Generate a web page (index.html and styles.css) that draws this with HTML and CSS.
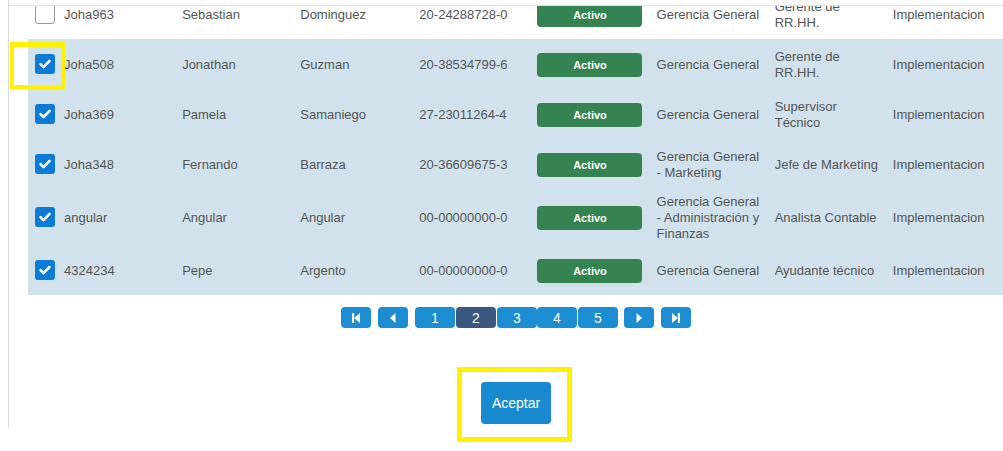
FILE: index.html
```html
<!DOCTYPE html>
<html lang="es">
<head>
<meta charset="utf-8">
<title>Usuarios</title>
<link rel="stylesheet" href="styles.css">
</head>
<body>
<div class="panel">
  <div class="topbar"></div>
  <div class="table-wrap">
    <table class="grid">
      <colgroup>
        <col class="c-chk"><col class="c118"><col class="c118"><col class="c119"><col class="c118"><col class="c119"><col class="c118"><col class="c118"><col class="c-last">
      </colgroup>
      <tbody>
        <tr>
          <td class="chk"><span class="box"></span></td>
          <td>Joha963</td><td>Sebastian</td><td>Dominguez</td><td>20-24288728-0</td>
          <td><span class="badge">Activo</span></td>
          <td>Gerencia General</td><td>Gerente de RR.HH.</td><td>Implementacion</td>
        </tr>
        <tr class="sel">
          <td class="chk"><span class="box on"><svg viewBox="0 0 20 20"><path d="M5.5 10.2l3 3 6-6.2"/></svg></span></td>
          <td>Joha508</td><td>Jonathan</td><td>Guzman</td><td>20-38534799-6</td>
          <td><span class="badge">Activo</span></td>
          <td>Gerencia General</td><td>Gerente de RR.HH.</td><td>Implementacion</td>
        </tr>
        <tr class="sel">
          <td class="chk"><span class="box on"><svg viewBox="0 0 20 20"><path d="M5.5 10.2l3 3 6-6.2"/></svg></span></td>
          <td>Joha369</td><td>Pamela</td><td>Samaniego</td><td>27-23011264-4</td>
          <td><span class="badge">Activo</span></td>
          <td>Gerencia General</td><td>Supervisor Técnico</td><td>Implementacion</td>
        </tr>
        <tr class="sel">
          <td class="chk"><span class="box on"><svg viewBox="0 0 20 20"><path d="M5.5 10.2l3 3 6-6.2"/></svg></span></td>
          <td>Joha348</td><td>Fernando</td><td>Barraza</td><td>20-36609675-3</td>
          <td><span class="badge">Activo</span></td>
          <td>Gerencia General - Marketing</td><td>Jefe de Marketing</td><td>Implementacion</td>
        </tr>
        <tr class="sel">
          <td class="chk"><span class="box on"><svg viewBox="0 0 20 20"><path d="M5.5 10.2l3 3 6-6.2"/></svg></span></td>
          <td>angular</td><td>Angular</td><td>Angular</td><td>00-00000000-0</td>
          <td><span class="badge">Activo</span></td>
          <td>Gerencia General - Administración y Finanzas</td><td>Analista Contable</td><td>Implementacion</td>
        </tr>
        <tr class="sel">
          <td class="chk"><span class="box on"><svg viewBox="0 0 20 20"><path d="M5.5 10.2l3 3 6-6.2"/></svg></span></td>
          <td>4324234</td><td>Pepe</td><td>Argento</td><td>00-00000000-0</td>
          <td><span class="badge">Activo</span></td>
          <td>Gerencia General</td><td>Ayudante técnico</td><td>Implementacion</td>
        </tr>
      </tbody>
    </table>
    <div class="pager">
      <button class="pg nav"><svg viewBox="0 0 8 10"><rect x="0" y="0" width="2.2" height="10"/><path d="M8 0v10L2.2 5z"/></svg></button>
      <button class="pg nav gap7"><svg viewBox="0 0 8 10"><path d="M6.5 0v10L1 5z"/></svg></button>
      <button class="pg num gap7">1</button>
      <button class="pg num active">2</button>
      <button class="pg num">3</button>
      <button class="pg num tight">4</button>
      <button class="pg num">5</button>
      <button class="pg nav gap6"><svg viewBox="0 0 8 10"><path d="M1.5 0v10L7 5z"/></svg></button>
      <button class="pg nav gap7"><svg viewBox="0 0 8 10"><path d="M0 0v10L5.8 5z"/><rect x="5.8" y="0" width="2.2" height="10"/></svg></button>
    </div>
    <div class="actions">
      <button class="accept">Aceptar</button>
    </div>
  </div>
</div>
<div class="mark mark-check"></div>
<div class="mark mark-accept"></div>
</body>
</html>
```

FILE: styles.css
```css
html, body {
  margin: 0;
  padding: 0;
  background: #fff;
}

body {
  font-family: "Liberation Sans", Arial, sans-serif;
  font-size: 13px;
  color: #555;
  width: 1003px;
  height: 451px;
  overflow: hidden;
  position: relative;
}

.panel {
  margin-left: 8px;
  border-left: 1px solid #dcdcdc;
  height: 428px;
  display: flex;
  flex-direction: column;
}

.topbar {
  height: 5px;
  border-bottom: 1px solid #e3e3e3;
  flex: none;
}

.table-wrap {
  margin-left: 19px;
  overflow: hidden;
  flex: 1;
}

.grid {
  margin-top: -17px;
  border-collapse: collapse;
  table-layout: fixed;
  width: 976px;
}

.c-chk { width: 32px; }
.c118 { width: 118px; }
.c119 { width: 119px; }
.c-last { width: 115px; }

.grid tr {
  height: 50px;
}

.grid tr.sel {
  background: #d1e2ec;
}

.grid td {
  padding: 5px 4px 3px;
  line-height: 16px;
  vertical-align: middle;
}

.grid td.chk {
  padding: 0 0 0 7px;
}

.box {
  display: block;
  width: 20px;
  height: 20px;
  box-sizing: border-box;
  border: 1px solid #9a9a9a;
  border-radius: 3px;
  background: #fff;
}

.box.on {
  border: none;
  background: #0c7bd8;
}

.box svg {
  display: block;
  width: 20px;
  height: 20px;
}

.box svg path {
  fill: none;
  stroke: #fff;
  stroke-width: 2.6;
  stroke-linecap: round;
  stroke-linejoin: round;
}

.badge {
  display: block;
  width: 105px;
  height: 24px;
  line-height: 24px;
  border-radius: 4px;
  background: #358350;
  color: #fff;
  font-size: 11px;
  font-weight: bold;
  text-align: center;
}

.pager {
  display: flex;
  justify-content: center;
  margin-top: 12px;
  padding-left: 1px;
}

.pg {
  height: 21px;
  border: none;
  border-radius: 4px;
  background: #1c8dd1;
  color: #fff;
  font-family: "Liberation Sans", Arial, sans-serif;
  font-size: 14px;
  padding: 0;
  display: flex;
  align-items: center;
  justify-content: center;
}

.pg.nav {
  width: 30px;
}

.pg.num {
  width: 40px;
  margin-left: 1px;
}

.pg.gap7 {
  margin-left: 7px;
}

.pg.gap6 {
  margin-left: 6px;
}

.pg.num.tight {
  margin-left: 0;
}

.pg.nav svg {
  width: 8px;
  height: 10px;
  fill: #fff;
}

.pg.active {
  background: #3a5880;
}

.actions {
  display: flex;
  justify-content: center;
  margin-top: 54px;
  padding-left: 1px;
}

.accept {
  width: 70px;
  height: 42px;
  border: none;
  border-radius: 4px;
  background: #1a8ad0;
  color: #fff;
  font-family: "Liberation Sans", Arial, sans-serif;
  font-size: 14px;
  padding: 0;
}

.mark {
  position: absolute;
  box-sizing: border-box;
  border: 5px solid #fff200;
}

.mark-check {
  left: 10px;
  top: 42px;
  width: 55px;
  height: 47px;
  border-width: 5px 4px 4px 4px;
}

.mark-accept {
  left: 457px;
  top: 367px;
  width: 115px;
  height: 75px;
}
```
